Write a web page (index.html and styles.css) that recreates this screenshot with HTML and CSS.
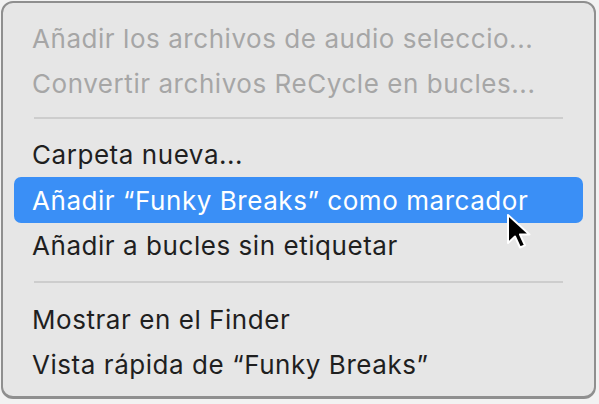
FILE: index.html
```html
<!DOCTYPE html>
<html lang="es">

<head>
    <meta charset="UTF-8" />
    <meta name="viewport" content="width=device-width, initial-scale=1.0" />
    <title>Menú contextual</title>

    <link rel="stylesheet" href="styles.css">

</head>

<body>
    <div class="menu">
        <div class="menu-item disabled">Añadir los archivos de audio seleccio...</div>
        <div class="menu-item disabled">Convertir archivos ReCycle en bucles...</div>
        <div class="separator"></div>
        <div class="menu-item">Carpeta nueva...</div>
        <div class="menu-item active">Añadir “Funky Breaks” como marcador</div>
        <div class="menu-item">Añadir a bucles sin etiquetar</div>
        <div class="separator wide"></div>
        <div class="menu-item">Mostrar en el Finder</div>
        <div class="menu-item">Vista rápida de “Funky Breaks”</div>

        <!-- mouse pointer over the highlighted item -->
        <svg class="cursor" width="30" height="40" viewBox="0 0 30 40">
            <path d="M2 2 L2 30 L9 23.5 L14 34.5 L19 32.3 L14 21.5 L23.5 21.5 Z" fill="#000" stroke="#fff" stroke-width="2" stroke-linejoin="round" />
        </svg>
    </div>
</body>

</html>
```

FILE: styles.css
```css
html,
body {
    height: 100%;
    margin: 0;
    padding: 0;
}

body {
    background: #f2f2f2;
    font-family: Inter, "Liberation Sans", Arial, sans-serif;
    padding: 1px;
    box-sizing: border-box;
}

.menu {
    position: relative;
    width: 595px;
    height: 398px;
    box-sizing: border-box;
    background: #e6e6e6;
    border: 2px solid #8f8f8f;
    border-bottom-width: 3px;
    border-radius: 12px;
    padding: 13px 11px 0 11px;
}

.menu-item {
    height: 45px;
    display: flex;
    align-items: center;
    padding: 0 18px;
    font-size: 26px;
    letter-spacing: 0.55px;
    color: #1f1f1f;
    white-space: nowrap;
    box-sizing: border-box;
}

.menu-item.disabled {
    color: #a6a6a6;
}

.menu-item.active {
    background: #3a8ff6;
    color: #fff;
    border-radius: 7px;
    height: 46px;
}

.separator {
    height: 2px;
    background: #cdcdcd;
    margin: 11px 20px 13px 20px;
}

.separator.wide {
    margin: 13px 20px 14px 20px;
}

.cursor {
    position: absolute;
    left: 503px;
    top: 210px;
}
```
